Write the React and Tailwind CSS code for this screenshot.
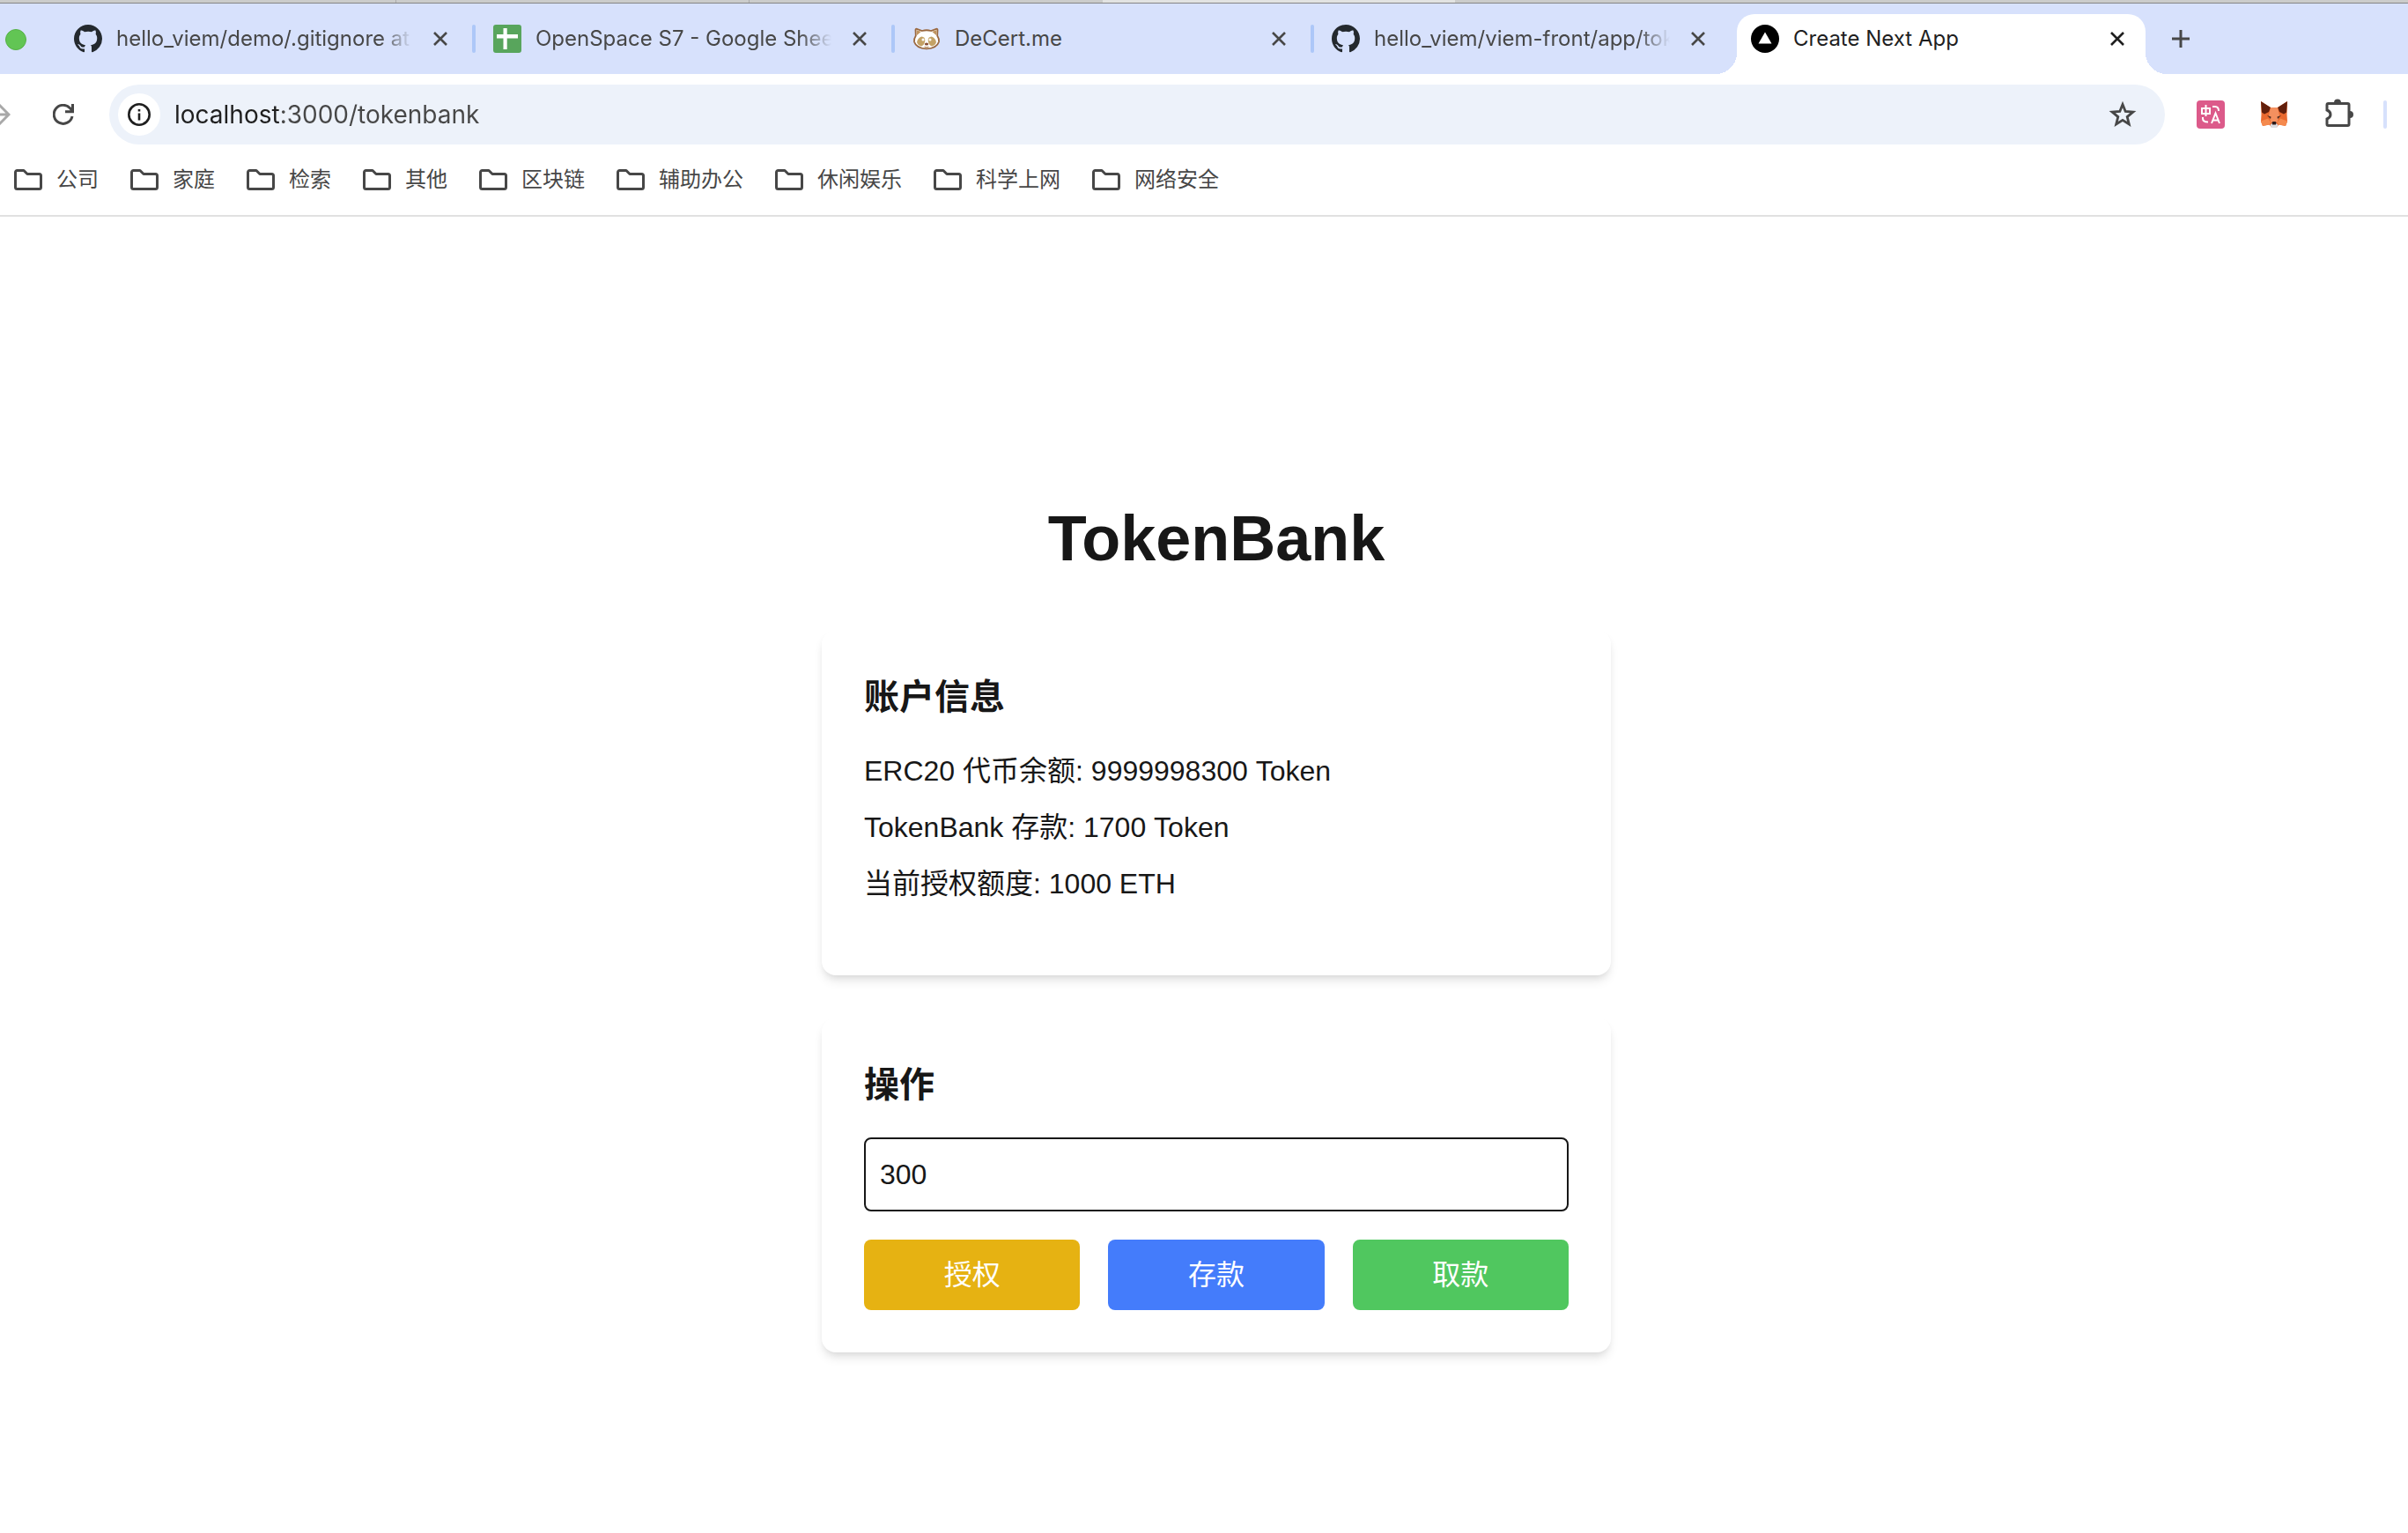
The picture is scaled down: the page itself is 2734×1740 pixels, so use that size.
function GithubIcon() {
  return (
    <svg viewBox="0 0 16 16" className="size-8 shrink-0 fill-[#24292e]" aria-hidden="true">
      <path d="M8 0C3.58 0 0 3.58 0 8c0 3.54 2.29 6.53 5.47 7.59.4.07.55-.17.55-.38 0-.19-.01-.82-.01-1.49-2.01.37-2.53-.49-2.69-.94-.09-.23-.48-.94-.82-1.13-.28-.15-.68-.52-.01-.53.63-.01 1.08.58 1.23.82.72 1.21 1.87.87 2.33.66.07-.52.28-.87.51-1.07-1.78-.2-3.64-.89-3.64-3.95 0-.87.31-1.59.82-2.15-.08-.2-.36-1.02.08-2.12 0 0 .67-.21 2.2.82.64-.18 1.32-.27 2-.27.68 0 1.36.09 2 .27 1.53-1.04 2.2-.82 2.2-.82.44 1.1.16 1.92.08 2.12.51.56.82 1.27.82 2.15 0 3.07-1.87 3.75-3.65 3.95.29.25.54.73.54 1.48 0 1.07-.01 1.93-.01 2.2 0 .21.15.46.55.38A8.013 8.013 0 0016 8c0-4.42-3.58-8-8-8z" />
    </svg>
  );
}

function SheetsIcon() {
  return (
    <svg viewBox="0 0 32 32" className="size-8 shrink-0" aria-hidden="true">
      <rect width="32" height="32" rx="3" fill="#58a55c" />
      <path d="M4 11h24v4.400H4z M11.500 4h4.200v24h-4.200z" fill="#fff" />
    </svg>
  );
}

function RaccoonIcon() {
  return (
    <svg viewBox="0 0 32 32" className="size-8 shrink-0" aria-hidden="true">
      <path
        d="M3.500 6Q3.500 4.500 5 4.800L11 7Q16 5.500 21 7L27 4.800Q28.500 4.500 28.500 6L28.200 12.500Q30.500 16 30 19.500Q27.500 27 16 27.300Q4.500 27 2 19.500Q1.500 16 3.800 12.500Z"
        fill="#fff"
        stroke="#9a6840"
        strokeWidth="1.800"
      />
      <path d="M4.500 6l5.200 1.900L5 12z M27.500 6l-5.200 1.900L27 12z" fill="#c09460" />
      <path d="M5 20q.8-5 5.300-6.500 4.200.3 4 4.500-.4 5-4.300 6.500-4-1-5-4.500z M27 20q-.8-5-5.300-6.500-4.200.3-4 4.500.4 5 4.300 6.500 4-1 5-4.500z" fill="#c4a266" />
      <circle cx="12" cy="17" r="1.500" fill="#fff" />
      <circle cx="20" cy="17" r="1.500" fill="#fff" />
      <ellipse cx="16" cy="22" rx="2.200" ry="1.600" fill="#8a5035" />
      <path d="M13.500 25q2.500 1.500 5 0" stroke="#b38a5c" strokeWidth="1" fill="none" />
    </svg>
  );
}

function NextIcon() {
  return (
    <svg viewBox="0 0 32 32" className="size-8 shrink-0" aria-hidden="true">
      <circle cx="16" cy="16" r="16" fill="#000" />
      <path d="M16 8.500l7.500 13h-15z" fill="#fff" />
    </svg>
  );
}

function CloseIcon() {
  return (
    <svg viewBox="0 0 16 16" className="size-4" fill="none" stroke="currentColor" strokeWidth="2.600" aria-hidden="true">
      <path d="M1 1l14 14M15 1L1 15" />
    </svg>
  );
}

function Tab({ icon, title, active, fade, separator }) {
  return (
    <div
      role="tab"
      aria-selected={!!active}
      className={
        active
          ? "relative ml-1 flex h-[68px] w-[464px] items-center rounded-t-[20px] bg-white pb-3 pl-4 pr-6 text-[#1f1f1f]"
          : "flex h-[68px] w-[476px] items-center pb-3 pl-5 text-[#474747]"
      }
    >
      {active && (
        <>
          <span className="absolute bottom-0 right-full size-6 bg-[radial-gradient(circle_at_0_0,transparent_24px,white_24px)]" />
          <span className="absolute bottom-0 left-full size-6 bg-[radial-gradient(circle_at_100%_0,transparent_24px,white_24px)]" />
        </>
      )}
      {icon}
      <span
        className={
          fade
            ? "ml-4 min-w-0 flex-1 overflow-hidden whitespace-nowrap mask-[linear-gradient(to_right,black_calc(100%-36px),transparent)]"
            : "ml-4 min-w-0 flex-1 overflow-hidden whitespace-nowrap"
        }
      >
        {title}
      </span>
      <button type="button" aria-label={"Close " + title} className={active ? "ml-6" : "ml-6 mr-7"}>
        <CloseIcon />
      </button>
      {!active && (
        <span className={separator ? "h-8 w-1 rounded-full bg-[#adc7f8]" : "h-8 w-1"} />
      )}
    </div>
  );
}

function FolderIcon() {
  return (
    <svg viewBox="0 0 32 24" className="h-6 w-8" fill="none" stroke="#474747" strokeWidth="3" strokeLinejoin="round" aria-hidden="true">
      <path d="M1.500 3.500a2 2 0 0 1 2-2H11l4 4h13.500a2 2 0 0 1 2 2v13a2 2 0 0 1-2 2h-25a2 2 0 0 1-2-2z" />
    </svg>
  );
}

function TranslateIcon() {
  return (
    <svg viewBox="0 0 32 32" className="size-8" fill="none" stroke="#fff" strokeWidth="2" aria-hidden="true">
      <rect width="32" height="32" rx="4" fill="#dc5a8a" stroke="none" />
      <path d="M6 9h9v6H6z M10.500 5v13" />
      <path d="M18 7h3q4 0 4 5" />
      <path d="M7 19v1.500q0 4 6 4" />
      <path d="M17 26l4.500-11.500L26 26M18.500 22.500h6" />
    </svg>
  );
}

function FoxIcon() {
  return (
    <svg viewBox="0 0 32 32" className="size-8" aria-hidden="true">
      <path d="M1 1L12 8h8L31 1l-.5 15 .5 8-2 5-7.500-1.500L19 30.500h-6l-2.500-3L3 29l-2-5 .5-8z" fill="#e9692f" />
      <path d="M1 1L12 8l-2 5-5 2.500-3-2z M31 1L20 8l2 5 5 2.500 3-2z" fill="#611f0c" />
      <path d="M12 8h8l2 9-2.500 8h-7L10 17z" fill="#f4905f" />
      <path d="M1 23.500L9 20.500l3.500 4.500-2 2.500L3 29z M31 23.500l-8-3-3.500 4.500 2 2.500L29 29z" fill="#f58a4e" />
      <path d="M8 17l4.500 1.500-.5 2.500z M24 17l-4.500 1.500.5 2.500z" fill="#4a2a20" />
      <path d="M11.500 28l2.500-2.500h4l2.500 2.500-1.500 3h-6z" fill="#dcdde2" />
      <path d="M13.500 25l1-1h3l1 1-.5 2.500h-4z" fill="#2b1a1a" />
    </svg>
  );
}

function PuzzleIcon() {
  return (
    <svg viewBox="0 0 32 32" className="size-8" aria-hidden="true">
      <path
        d="M3.500 5.500h22a1.500 1.500 0 0 1 1.500 1.500v22a1.500 1.500 0 0 1-1.500 1.500h-22A1.500 1.500 0 0 1 2 29v-6q4-1.500 4-5t-4-5V7a1.500 1.500 0 0 1 1.500-1.500z"
        fill="none"
        stroke="#474747"
        strokeWidth="3"
      />
      <path d="M10 4.500a4 4 0 0 1 8 0z M28 14a4 4 0 0 1 0 8z" fill="#474747" />
    </svg>
  );
}

const bookmarks = ["公司", "家庭", "检索", "其他", "区块链", "辅助办公", "休闲娱乐", "科学上网", "网络安全"];

function Browser() {
  return (
    <header className='font-[Inter,"Noto_Sans_CJK_SC",sans-serif] text-2xl'>
      <div className="flex h-1 border-b border-[#858585] bg-[#cbcccb]">
        <span className="w-[450px] border-r border-[#aaaaaa]" />
        <span className="w-[401px] border-r border-[#aaaaaa]" />
        <span className="w-[401px]" />
        <span className="w-[400px] bg-[#e2e3e2]" />
      </div>
      <div className="flex h-20 items-end overflow-hidden bg-[#d7e1fc] pl-1.5">
        <span className="mb-[27px] mr-[34px] size-6 shrink-0 rounded-full border border-[#56b146] bg-[#62c554]" />
        <div role="tablist" className="flex">
          <Tab icon={<GithubIcon />} title="hello_viem/demo/.gitignore at main" fade separator />
          <Tab icon={<SheetsIcon />} title="OpenSpace S7 - Google Sheets" fade separator />
          <Tab icon={<RaccoonIcon />} title="DeCert.me" separator />
          <Tab icon={<GithubIcon />} title="hello_viem/viem-front/app/tokenbank" fade />
          <Tab icon={<NextIcon />} title="Create Next App" active />
        </div>
        <button type="button" aria-label="New tab" className="mb-[30px] ml-[30px] text-[#474747]">
          <svg viewBox="0 0 20 20" className="size-5" stroke="currentColor" strokeWidth="3" aria-hidden="true">
            <path d="M10 0v20M0 10h20" />
          </svg>
        </button>
      </div>
      <div className="flex h-[92px] items-center pr-6">
        <button type="button" aria-label="Forward" className="mr-12 w-3 overflow-hidden text-[#a8a8a8]">
          <svg viewBox="0 0 12 24" className="h-6 w-3" fill="none" stroke="currentColor" strokeWidth="3" aria-hidden="true">
            <path d="M0 12h10M-1 1l11 11-11 11" />
          </svg>
        </button>
        <button type="button" aria-label="Reload" className="mr-10 text-[#474747]">
          <svg viewBox="0 0 24 24" className="size-6" fill="none" stroke="currentColor" strokeWidth="3" aria-hidden="true">
            <path d="M22 14A10.500 10.500 0 1 1 19.500 4.800L22.500 8M22.500 0v8.700H14" />
          </svg>
        </button>
        <div className="flex h-[68px] flex-1 items-center rounded-full bg-[#edf2fa] pl-2.5 pr-8">
          <button type="button" aria-label="Site information" className="flex size-12 items-center justify-center rounded-full bg-white">
            <svg viewBox="0 0 26 26" className="size-[26px]" fill="none" stroke="#1f1f1f" strokeWidth="2.600" aria-hidden="true">
              <circle cx="13" cy="13" r="11.700" />
              <path d="M13 11.500v8M13 7v2.600" />
            </svg>
          </button>
          <input
            type="text"
            aria-label="Address"
            defaultValue="localhost:3000/tokenbank"
            className="ml-4 flex-1 bg-[linear-gradient(to_right,#1f1f1f_120px,#474747_120px)] bg-clip-text pt-0.5 text-[28px] text-transparent outline-none"
          />
          <button type="button" aria-label="Bookmark this tab" className="text-[#474747]">
            <svg viewBox="0 0 32 32" className="size-8" fill="none" stroke="currentColor" strokeWidth="2.800" aria-hidden="true">
              <path d="M16 4.500l3.200 8 8.600.6-6.600 5.500 2.100 8.400L16 22.400 8.700 27l2.100-8.400-6.600-5.500 8.600-.6z" />
            </svg>
          </button>
        </div>
        <button type="button" aria-label="Translate" className="ml-9"><TranslateIcon /></button>
        <button type="button" aria-label="MetaMask" className="ml-10"><FoxIcon /></button>
        <button type="button" aria-label="Extensions" className="ml-[42px] pb-1"><PuzzleIcon /></button>
        <span className="ml-[34px] h-8 w-1 rounded-full bg-[#d7e1fc]" />
      </div>
      <nav aria-label="Bookmarks" className="flex h-[70px] gap-9 border-b-2 border-[#e1e1e1] pl-4 pt-2.5 text-[#474747]">
        {bookmarks.map((name) => (
          <a key={name} href="#" className="flex h-9 items-center gap-4 leading-9">
            <FolderIcon />
            {name}
          </a>
        ))}
      </nav>
    </header>
  );
}

const card = "rounded-2xl bg-white p-12 shadow-[0_8px_12px_-2px_rgba(0,0,0,0.1),0_4px_8px_-4px_rgba(0,0,0,0.1)]";

export default function App() {
  return (
    <div className="min-h-screen bg-white">
      <Browser />
      <main className='flex flex-col items-center pl-7 pt-[325px] pb-16 font-["Liberation_Sans","Noto_Sans_CJK_SC",sans-serif] text-[32px] leading-[48px] text-[#171717]'>
        <h1 className="mb-16 text-7xl leading-20 font-bold">TokenBank</h1>
        <div className="flex w-full max-w-4xl flex-col gap-12">
          <section className={card}>
            <h2 className="mb-8 text-[40px] leading-14 font-bold">账户信息</h2>
            <div className="flex flex-col gap-4 pb-8">
              <p>ERC20 代币余额: 9999998300 Token</p>
              <p>TokenBank 存款: 1700 Token</p>
              <p>当前授权额度: 1000 ETH</p>
            </div>
          </section>
          <section className={card}>
            <h2 className="mb-8 text-[40px] leading-14 font-bold">操作</h2>
            <input
              type="text"
              aria-label="金额"
              defaultValue="300"
              className="mb-8 block h-[84px] w-full rounded-lg border-2 border-[#171717] px-4"
            />
            <div className="grid grid-cols-3 gap-8 text-white">
              <button type="button" className="rounded-lg bg-[#e6b212] py-4">授权</button>
              <button type="button" className="rounded-lg bg-[#447cfb] py-4">存款</button>
              <button type="button" className="rounded-lg bg-[#50c75f] py-4">取款</button>
            </div>
          </section>
        </div>
      </main>
    </div>
  );
}
